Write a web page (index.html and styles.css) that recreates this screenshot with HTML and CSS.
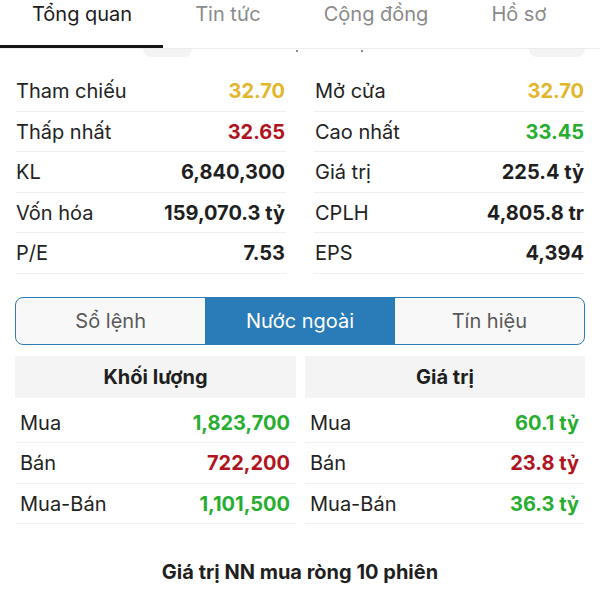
FILE: index.html
```html
<!DOCTYPE html>
<html lang="vi">
<head>
<meta charset="utf-8">
<title>Tổng quan</title>
<link rel="stylesheet" href="styles.css">
</head>
<body>
<nav class="tabs">
  <div class="tab active">Tổng quan</div>
  <div class="tab">Tin tức</div>
  <div class="tab">Cộng đồng</div>
  <div class="tab">Hồ sơ</div>
</nav>
<div class="peek">
  <span class="pill pill-a"></span>
  <span class="dot dot-a"></span>
  <span class="dot dot-b"></span>
  <span class="pill pill-b"></span>
</div>
<section class="stats">
  <div class="col">
    <div class="row"><span class="label">Tham chiếu</span><span class="val ref">32.70</span></div>
    <div class="row"><span class="label">Thấp nhất</span><span class="val down">32.65</span></div>
    <div class="row"><span class="label">KL</span><span class="val">6,840,300</span></div>
    <div class="row"><span class="label">Vốn hóa</span><span class="val">159,070.3 tỷ</span></div>
    <div class="row"><span class="label">P/E</span><span class="val">7.53</span></div>
  </div>
  <div class="col">
    <div class="row"><span class="label">Mở cửa</span><span class="val ref">32.70</span></div>
    <div class="row"><span class="label">Cao nhất</span><span class="val up">33.45</span></div>
    <div class="row"><span class="label">Giá trị</span><span class="val">225.4 tỷ</span></div>
    <div class="row"><span class="label">CPLH</span><span class="val">4,805.8 tr</span></div>
    <div class="row"><span class="label">EPS</span><span class="val">4,394</span></div>
  </div>
</section>
<div class="segmented">
  <div class="seg">Sổ lệnh</div>
  <div class="seg active">Nước ngoài</div>
  <div class="seg">Tín hiệu</div>
</div>
<section class="foreign">
  <div class="fcol">
    <div class="fhead">Khối lượng</div>
    <div class="frow"><span class="label">Mua</span><span class="val up">1,823,700</span></div>
    <div class="frow"><span class="label">Bán</span><span class="val down">722,200</span></div>
    <div class="frow"><span class="label">Mua-Bán</span><span class="val up">1,101,500</span></div>
  </div>
  <div class="fcol">
    <div class="fhead">Giá trị</div>
    <div class="frow"><span class="label">Mua</span><span class="val up">60.1 tỷ</span></div>
    <div class="frow"><span class="label">Bán</span><span class="val down">23.8 tỷ</span></div>
    <div class="frow"><span class="label">Mua-Bán</span><span class="val up">36.3 tỷ</span></div>
  </div>
</section>
<h3 class="chart-title">Giá trị NN mua ròng 10 phiên</h3>
</body>
</html>
```

FILE: styles.css
```css
* { box-sizing: border-box; }
html, body {
  margin: 0;
  padding: 0;
  background: #ffffff;
}
body {
  font-family: Inter, "Noto Sans", "Liberation Sans", sans-serif;
  color: #1f1f1f;
  width: 600px;
  overflow: hidden;
}

.tabs {
  display: flex;
  height: 49px;
  border-bottom: 1px solid #ececec;
}
.tab {
  padding: 2px 31px 0 32px;
  height: 48px;
  font-size: 20px;
  line-height: 24px;
  color: #8a8a8a;
  border-bottom: 3px solid transparent;
  white-space: nowrap;
}
.tab.active {
  color: #1c1c1c;
  border-bottom-color: #141414;
}

.peek {
  display: flex;
  align-items: flex-start;
  height: 22px;
  padding-left: 143px;
  padding-right: 15px;
}
.pill {
  display: block;
  height: 8px;
  background: #f3f3f3;
  border-radius: 0 0 8px 8px;
}
.pill-a { width: 49px; }
.pill-b { width: 56px; margin-left: auto; }
.dot {
  display: block;
  width: 2px;
  height: 2px;
  margin-top: 1px;
  background: #8a8a8a;
}
.dot-a { margin-left: 104px; }
.dot-b { margin-left: 63px; }

.stats {
  display: grid;
  grid-template-columns: 1fr 1fr;
  column-gap: 28px;
  padding: 0 15px;
}
.row {
  display: flex;
  justify-content: space-between;
  align-items: center;
  height: 40.5px;
  padding: 1px 1px 0;
  border-bottom: 1px solid #f0f0f0;
  font-size: 20px;
}
.label { color: #232323; }
.val { font-weight: 700; color: #1f1f1f; }
.val.ref { color: #e2b62c; }
.val.down { color: #b0141e; }
.val.up { color: #27ad2f; }

.segmented {
  display: flex;
  margin: 23px 15px 0;
  height: 48px;
  border: 1.5px solid #2b7bb6;
  border-radius: 8px;
  overflow: hidden;
  background: #f8f8f9;
}
.seg {
  flex: 1;
  display: flex;
  align-items: center;
  justify-content: center;
  font-size: 20px;
  color: #595959;
}
.seg.active {
  background: #2a7cb8;
  color: #ffffff;
}

.foreign {
  display: grid;
  grid-template-columns: 281px 280px;
  column-gap: 9px;
  padding: 0 15px;
  margin-top: 11px;
}
.fhead {
  height: 42px;
  display: flex;
  align-items: center;
  justify-content: center;
  background: #f4f4f4;
  font-size: 20px;
  font-weight: 700;
  color: #1f1f1f;
  margin-bottom: 5px;
}
.frow {
  display: flex;
  justify-content: space-between;
  align-items: center;
  height: 40.5px;
  padding: 1px 6px 0 5px;
  border-bottom: 1px solid #f0f0f0;
  font-size: 20px;
}

.chart-title {
  margin: 34px 0 0;
  text-align: center;
  font-size: 20px;
  line-height: 28px;
  font-weight: 700;
  color: #1f1f1f;
}
```
